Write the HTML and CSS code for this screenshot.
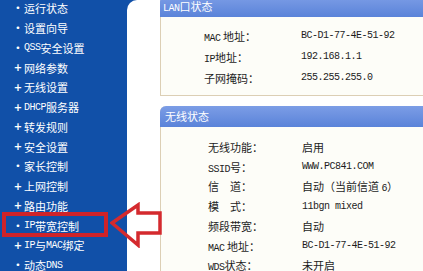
FILE: index.html
```html
<!DOCTYPE html>
<html>
<head>
    <title>路由器状态</title>
    <link rel="stylesheet" href="styles.css">
</head>

<body>
    <div class="page">
        <nav class="menu">
            <ul>
                <li><span class="dot">•</span>运行状态</li>
                <li><span class="dot">•</span>设置向导</li>
                <li><span class="dot">•</span><span class="en">QSS</span>安全设置</li>
                <li><span class="plus">+</span>网络参数</li>
                <li><span class="plus">+</span>无线设置</li>
                <li><span class="plus">+</span><span class="en">DHCP</span>服务器</li>
                <li><span class="plus">+</span>转发规则</li>
                <li><span class="plus">+</span>安全设置</li>
                <li><span class="dot">•</span>家长控制</li>
                <li><span class="plus">+</span>上网控制</li>
                <li><span class="plus">+</span>路由功能</li>
                <li class="marked"><span class="dot">•</span><span class="en">IP</span>带宽控制</li>
                <li><span class="plus">+</span><span class="en">IP</span>与<span class="en">MAC</span>绑定</li>
                <li><span class="dot">•</span>动态<span class="en">DNS</span></li>
            </ul>
        </nav>

        <main class="content">
            <section class="card lan">
                <div class="card-head"><span class="en">LAN</span>口状态</div>
                <div class="card-body">
                    <div class="row"><span class="label"><span class="en">MAC</span> 地址：</span><span class="value en">BC-D1-77-4E-51-92</span></div>
                    <div class="row"><span class="label"><span class="en">IP</span>地址：</span><span class="value en">192.168.1.1</span></div>
                    <div class="row"><span class="label">子网掩码：</span><span class="value en">255.255.255.0</span></div>
                </div>
            </section>

            <section class="card wlan">
                <div class="card-head">无线状态</div>
                <div class="card-body">
                    <div class="row"><span class="label">无线功能：</span><span class="value">启用</span></div>
                    <div class="row"><span class="label"><span class="en">SSID</span>号：</span><span class="value en">WWW.PC841.COM</span></div>
                    <div class="row"><span class="label">信　道：</span><span class="value">自动（当前信道 <span class="en">6</span>）</span></div>
                    <div class="row"><span class="label">模　式：</span><span class="value en">11bgn mixed</span></div>
                    <div class="row"><span class="label">频段带宽：</span><span class="value">自动</span></div>
                    <div class="row"><span class="label"><span class="en">MAC</span> 地址：</span><span class="value en">BC-D1-77-4E-51-92</span></div>
                    <div class="row"><span class="label"><span class="en">WDS</span>状态：</span><span class="value">未开启</span></div>
                </div>
            </section>
        </main>

        <!-- pointer drawn over the menu -->
        <svg class="arrow" width="54" height="46" viewBox="0 0 54 46">
            <polygon points="2,21 28,3 28,11 50,11 50,31 28,31 28,43" fill="none" stroke="#d42a2e" stroke-width="3.5"/>
        </svg>
    </div>
</body>
</html>
```

FILE: styles.css
```css
body {
    margin: 0;
    font-family: "Noto Sans CJK SC", "Liberation Sans", sans-serif;
    font-size: 11px;
}
.page {
    position: relative;
    display: flex;
    height: 271px;
    overflow: hidden;
    background-color: #1150a8;
}
.en {
    font-family: "Liberation Mono", monospace;
    font-size: 10px;
    letter-spacing: -0.5px;
}

/* left menu */
.menu {
    width: 127px;
    flex-shrink: 0;
    color: #fff;
}
.menu ul {
    list-style: none;
    margin: -1.6px 0 0;
    padding: 0;
}
.menu li {
    position: relative;
    display: flex;
    align-items: center;
    height: 19.75px;
}
.menu li .dot,
.menu li .plus {
    width: 24px;
    padding-left: 12px;
    box-sizing: border-box;
    text-align: center;
    font-family: "DejaVu Sans", sans-serif;
}
.menu li .dot {
    font-size: 9px;
}
.menu li .plus {
    font-size: 10px;
    font-weight: bold;
}
.menu li.marked::after {
    content: "";
    position: absolute;
    top: -4px;
    left: 2px;
    width: 106px;
    height: 25px;
    box-sizing: border-box;
    border: 4px solid #cf2329;
}

/* main area */
.content {
    flex: 1;
    background-color: #fff;
    border-top-left-radius: 10px;
    padding-left: 33px;
    color: #1c1c1c;
}
.card {
    margin-right: -20px;
    border: 1px solid #dccfb5;
    border-top: none;
    border-top-left-radius: 6px;
    background-color: #fdfdf8;
}
.card-head {
    height: 21px;
    line-height: 21px;
    margin-left: -1px;
    padding-left: 5px;
    border-top-left-radius: 6px;
    background: linear-gradient(#7c9de6, #5a83d9);
    color: #fff;
}
.card-body .row {
    display: flex;
    align-items: center;
    white-space: nowrap;
}
.lan {
    margin-top: -4px;
}
.lan .card-head {
    padding-left: 3px;
}
.lan .card-body {
    padding: 8px 0 7px 43px;
}
.lan .row {
    height: 21px;
}
.lan .label {
    width: 97px;
}
.wlan {
    margin-top: 10px;
}
.wlan .card-body {
    padding: 10px 0 10px 47px;
}
.wlan .row {
    height: 19.75px;
}
.wlan .label {
    width: 94px;
}

.arrow {
    position: absolute;
    left: 110px;
    top: 202px;
}
```
